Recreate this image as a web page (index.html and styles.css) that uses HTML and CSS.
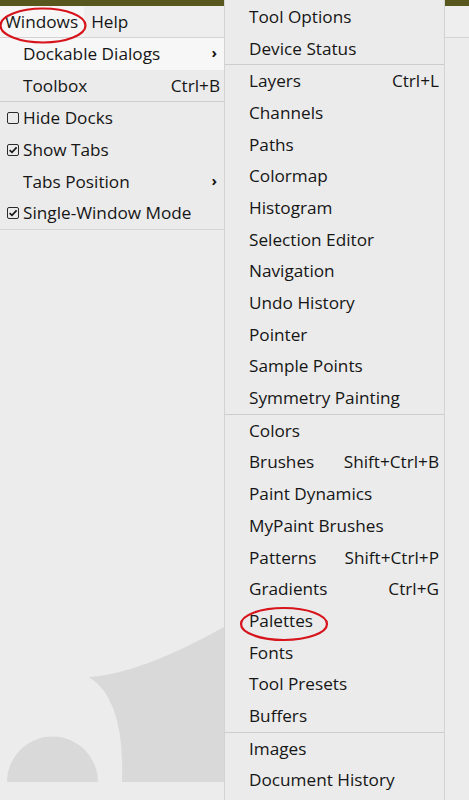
FILE: index.html
```html
<!DOCTYPE html>
<html>
<head>
<meta charset="utf-8">
<link rel="stylesheet" href="styles.css">
</head>
<body>
<div class="app">
  <div class="titlebar"></div>
  <div class="menubar">
    <span class="mb-item mb-active">Windows</span>
    <span class="mb-item">Help</span>
  </div>
  <div class="workspace">
    <svg class="watermark" width="469" height="761" viewBox="0 39 469 761">
      <path d="M7 783 A45.5 45.5 0 1 1 98 783 Z" fill="#d9d9d9"/>
      <path d="M89 678 Q140 675 224 628 L260 610 L260 783 L122 783 Q125 700 89 678 Z" fill="#d9d9d9"/>
    </svg>
  </div>

  <div class="menu menu-windows">
    <div class="row row-hover"><span class="label">Dockable Dialogs</span><span class="chev">›</span></div>
    <div class="row"><span class="label">Toolbox</span><span class="accel">Ctrl+B</span></div>
    <div class="sep"></div>
    <div class="row row-check"><span class="check"></span><span class="label">Hide Docks</span></div>
    <div class="row row-check"><span class="check checked"><svg width="10" height="10" viewBox="0 0 10 10"><path d="M1.6 5.2 L4 7.4 L8.6 2.4" fill="none" stroke="#1a1a1a" stroke-width="1.7"/></svg></span><span class="label">Show Tabs</span></div>
    <div class="row"><span class="label">Tabs Position</span><span class="chev">›</span></div>
    <div class="row row-check"><span class="check checked"><svg width="10" height="10" viewBox="0 0 10 10"><path d="M1.6 5.2 L4 7.4 L8.6 2.4" fill="none" stroke="#1a1a1a" stroke-width="1.7"/></svg></span><span class="label">Single-Window Mode</span></div>
  </div>

  <div class="menu menu-dialogs">
    <div class="row"><span class="label">Tool Options</span></div>
    <div class="row"><span class="label">Device Status</span></div>
    <div class="sep"></div>
    <div class="row"><span class="label">Layers</span><span class="accel">Ctrl+L</span></div>
    <div class="row"><span class="label">Channels</span></div>
    <div class="row"><span class="label">Paths</span></div>
    <div class="row"><span class="label">Colormap</span></div>
    <div class="row"><span class="label">Histogram</span></div>
    <div class="row"><span class="label">Selection Editor</span></div>
    <div class="row"><span class="label">Navigation</span></div>
    <div class="row"><span class="label">Undo History</span></div>
    <div class="row"><span class="label">Pointer</span></div>
    <div class="row"><span class="label">Sample Points</span></div>
    <div class="row"><span class="label">Symmetry Painting</span></div>
    <div class="sep"></div>
    <div class="row"><span class="label">Colors</span></div>
    <div class="row"><span class="label">Brushes</span><span class="accel">Shift+Ctrl+B</span></div>
    <div class="row"><span class="label">Paint Dynamics</span></div>
    <div class="row"><span class="label">MyPaint Brushes</span></div>
    <div class="row"><span class="label">Patterns</span><span class="accel">Shift+Ctrl+P</span></div>
    <div class="row"><span class="label">Gradients</span><span class="accel">Ctrl+G</span></div>
    <div class="row"><span class="label">Palettes</span></div>
    <div class="row"><span class="label">Fonts</span></div>
    <div class="row"><span class="label">Tool Presets</span></div>
    <div class="row"><span class="label">Buffers</span></div>
    <div class="sep"></div>
    <div class="row"><span class="label">Images</span></div>
    <div class="row"><span class="label">Document History</span></div>
  </div>

  <svg class="annot" width="469" height="800" viewBox="0 0 469 800">
    <ellipse cx="43" cy="25.5" rx="42.5" ry="17" fill="none" stroke="#d7141c" stroke-width="2.2"/>
    <ellipse cx="284" cy="624" rx="43" ry="16" fill="none" stroke="#d7141c" stroke-width="2.2"/>
  </svg>
</div>
</body>
</html>
```

FILE: styles.css
```css
* { box-sizing: border-box; }
html, body { margin: 0; padding: 0; }
body {
  background: #ececec;
  font-family: "Open Sans", "Noto Sans", sans-serif;
  font-size: 17.2px;
  color: #161616;
  overflow: hidden;
}
.app {
  position: relative;
  width: 469px;
  height: 800px;
  overflow: hidden;
  display: flex;
  flex-direction: column;
}
.titlebar {
  height: 6px;
  background: #58581e;
  flex: none;
}
.menubar {
  height: 32px;
  flex: none;
  display: flex;
  align-items: stretch;
  background: #eeeeee;
  border-bottom: 1px solid #d4d4d4;
}
.mb-item {
  display: flex;
  align-items: center;
  padding: 0 7px 1px 7px;
}
.mb-active {
  background: #f6f6f6;
  padding-left: 5px;
  padding-right: 6px;
}
.workspace {
  flex: 1;
  position: relative;
  background: #ececec;
}
.watermark {
  position: absolute;
  left: 0;
  top: 0;
}
.menu {
  position: absolute;
  background: #ebebeb;
  display: flex;
  flex-direction: column;
}
.menu-windows {
  left: 0;
  top: 38px;
  width: 224px;
  border-bottom: 1px solid #d6d6d6;
}
.menu-dialogs {
  left: 224px;
  top: 0;
  width: 221px;
  height: 820px;
  border-left: 1px solid #d3d3d3;
  border-right: 1px solid #d3d3d3;
  padding-top: 1px;
}
.row {
  height: 31.7px;
  flex: none;
  display: flex;
  align-items: center;
  white-space: nowrap;
  padding-bottom: 1px;
}
.menu-windows .row {
  padding-left: 23px;
  padding-right: 4px;
}
.menu-dialogs .row {
  padding-left: 24px;
  padding-right: 5px;
}
.row-hover {
  background: #f7f7f7;
}
.menu-windows .row-check {
  padding-left: 7px;
}
.check {
  width: 12px;
  height: 12px;
  border: 1.3px solid #2a2a2a;
  border-radius: 2px;
  margin-right: 4px;
  display: flex;
  align-items: center;
  justify-content: center;
  flex: none;
  margin-top: 1px;
}
.check svg { display: block; }
.accel {
  margin-left: auto;
}
.chev {
  margin-left: auto;
  margin-right: 3px;
  font-size: 15px;
  font-weight: 700;
  transform: scaleY(0.9);
}
.sep {
  height: 1px;
  flex: none;
  background: #cdcdcd;
}
.annot {
  position: absolute;
  left: 0;
  top: 0;
  pointer-events: none;
}
```
